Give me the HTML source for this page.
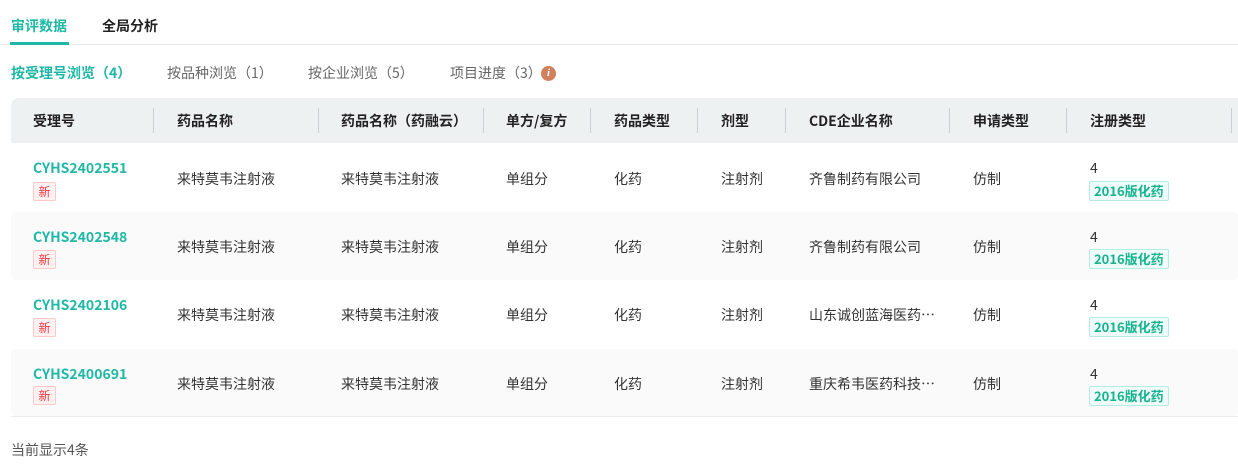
<!DOCTYPE html>
<html><head><meta charset="utf-8"><style>
*{margin:0;padding:0;box-sizing:border-box}
body{width:1238px;height:474px;background:#fff;font-family:"Noto Sans CJK SC","Liberation Sans",sans-serif;font-size:14px;line-height:16px;color:#333;position:relative;overflow:hidden}
.a{position:absolute;white-space:nowrap}
.tab{top:18px;font-size:14px;font-weight:bold;color:#222}
.sub{top:65px;font-size:14px;color:#666}
.hd{position:absolute;left:11px;top:98px;width:1227px;height:45px;background:#eef1f2;border-radius:8px 0 0 0}
.hd span{position:absolute;top:15px;font-weight:bold;color:#222;font-size:14px}
.dv{position:absolute;top:10px;width:1px;height:25px;background:#c8d0d2}
.row{position:absolute;left:11px;width:1227px}
.row .c{position:absolute;font-size:14px;color:#333;white-space:nowrap}
.id{position:absolute;left:22px;font-weight:bold;color:#1fb8a6;font-size:14px}
.new{position:absolute;left:22px;width:23px;height:19px;border:1px solid #ffc9c9;background:#fff1f1;color:#f0393e;font-size:12px;text-align:center;line-height:17px;border-radius:2px}
.tag{position:absolute;left:1078px;height:20px;padding:0 4px;border:1px solid #b3ece1;background:#effbf8;color:#16b38f;font-size:13px;font-weight:bold;line-height:18px;border-radius:2px}
</style></head><body>
<div class="a tab" style="left:11px;color:#1fb8a6">审评数据</div>
<div class="a tab" style="left:102px">全局分析</div>
<div class="a" style="left:0;top:44px;width:1238px;height:1px;background:#e6e9ec"></div>
<div class="a" style="left:10px;top:42px;width:59px;height:3px;background:#1fb8a6"></div>

<div class="a sub" style="left:11px;color:#1fb8a6;font-weight:bold">按受理号浏览（4）</div>
<div class="a sub" style="left:167px">按品种浏览（1）</div>
<div class="a sub" style="left:308px">按企业浏览（5）</div>
<div class="a sub" style="left:450px">项目进度（3）</div>
<div class="a" style="left:541px;top:66px;width:15px;height:15px;border-radius:50%;background:#d0805a;color:#fff;font-size:11px;font-weight:bold;font-style:italic;text-align:center;line-height:15px;font-family:'Liberation Serif',serif">i</div>

<div class="hd">
<span style="left:22px">受理号</span><div class="dv" style="left:142px"></div>
<span style="left:166px">药品名称</span><div class="dv" style="left:307px"></div>
<span style="left:330px">药品名称（药融云）</span><div class="dv" style="left:472px"></div>
<span style="left:495px">单方/复方</span><div class="dv" style="left:579px"></div>
<span style="left:603px">药品类型</span><div class="dv" style="left:686px"></div>
<span style="left:710px">剂型</span><div class="dv" style="left:774px"></div>
<span style="left:798px">CDE企业名称</span><div class="dv" style="left:938px"></div>
<span style="left:962px">申请类型</span><div class="dv" style="left:1055px"></div>
<span style="left:1079px">注册类型</span><div class="dv" style="left:1220px"></div>
</div>

<div class="row" style="top:143px;height:69px">
<div class="id" style="top:17px">CYHS2402551</div><div class="new" style="top:39px">新</div>
<div class="c" style="left:166px;top:28px">来特莫韦注射液</div><div class="c" style="left:330px;top:28px">来特莫韦注射液</div><div class="c" style="left:495px;top:28px">单组分</div><div class="c" style="left:603px;top:28px">化药</div><div class="c" style="left:710px;top:28px">注射剂</div><div class="c" style="left:798px;top:28px">齐鲁制药有限公司</div><div class="c" style="left:962px;top:28px">仿制</div><div class="c" style="left:1079px;top:17px">4</div><div class="tag" style="top:38px">2016版化药</div>
</div>
<div class="row" style="top:212px;height:68px;background:#fafafa;border-radius:4px">
<div class="id" style="top:17px">CYHS2402548</div><div class="new" style="top:38px">新</div>
<div class="c" style="left:166px;top:27px">来特莫韦注射液</div><div class="c" style="left:330px;top:27px">来特莫韦注射液</div><div class="c" style="left:495px;top:27px">单组分</div><div class="c" style="left:603px;top:27px">化药</div><div class="c" style="left:710px;top:27px">注射剂</div><div class="c" style="left:798px;top:27px">齐鲁制药有限公司</div><div class="c" style="left:962px;top:27px">仿制</div><div class="c" style="left:1079px;top:17px">4</div><div class="tag" style="top:37px">2016版化药</div>
</div>
<div class="row" style="top:280px;height:69px">
<div class="id" style="top:17px">CYHS2402106</div><div class="new" style="top:38px">新</div>
<div class="c" style="left:166px;top:27px">来特莫韦注射液</div><div class="c" style="left:330px;top:27px">来特莫韦注射液</div><div class="c" style="left:495px;top:27px">单组分</div><div class="c" style="left:603px;top:27px">化药</div><div class="c" style="left:710px;top:27px">注射剂</div><div class="c" style="left:798px;top:27px">山东诚创蓝海医药…</div><div class="c" style="left:962px;top:27px">仿制</div><div class="c" style="left:1079px;top:17px">4</div><div class="tag" style="top:37px">2016版化药</div>
</div>
<div class="row" style="top:349px;height:67px;background:#fafafa;border-radius:4px">
<div class="id" style="top:17px">CYHS2400691</div><div class="new" style="top:37px">新</div>
<div class="c" style="left:166px;top:27px">来特莫韦注射液</div><div class="c" style="left:330px;top:27px">来特莫韦注射液</div><div class="c" style="left:495px;top:27px">单组分</div><div class="c" style="left:603px;top:27px">化药</div><div class="c" style="left:710px;top:27px">注射剂</div><div class="c" style="left:798px;top:27px">重庆希韦医药科技…</div><div class="c" style="left:962px;top:27px">仿制</div><div class="c" style="left:1079px;top:17px">4</div><div class="tag" style="top:37px">2016版化药</div>
</div>
<div class="a" style="left:11px;top:416px;width:1227px;height:1px;background:#ebebf0"></div>
<div class="a" style="left:11px;top:442px;font-size:14px;color:#555">当前显示4条</div>
</body></html>
